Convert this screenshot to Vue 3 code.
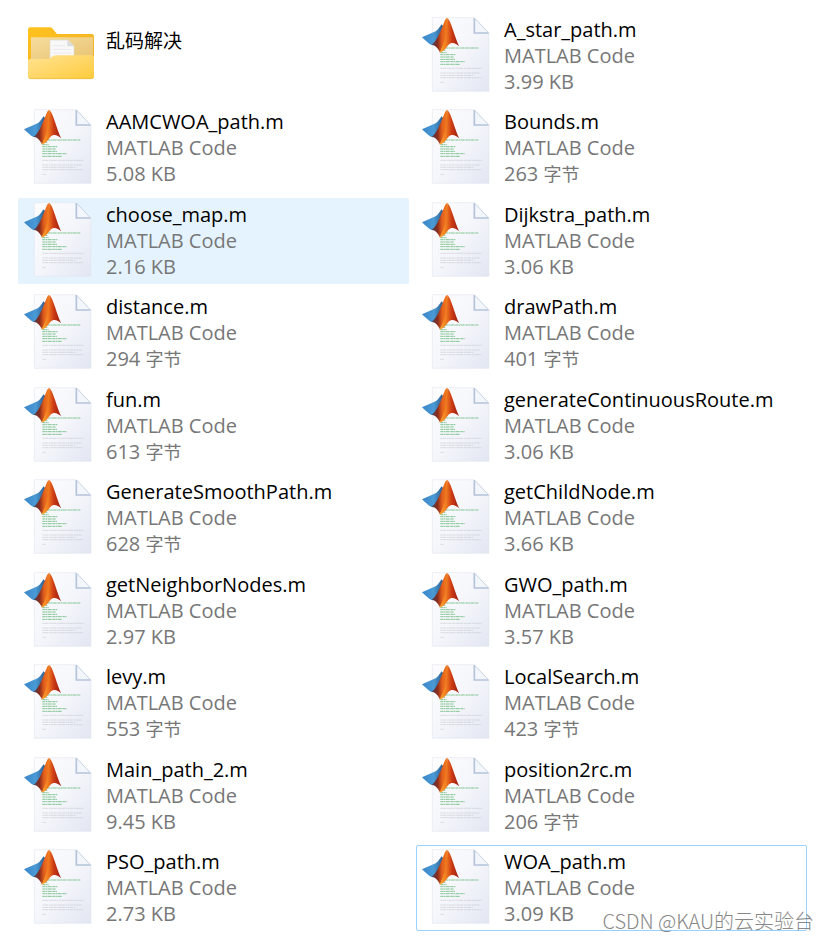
<script setup>
import { ref } from 'vue'

const files = [
  { name: '乱码解决', folder: true },
  { name: 'A_star_path.m', size: '3.99', unit: 'KB' },
  { name: 'AAMCWOA_path.m', size: '5.08', unit: 'KB' },
  { name: 'Bounds.m', size: '263', unit: '字节' },
  { name: 'choose_map.m', size: '2.16', unit: 'KB' },
  { name: 'Dijkstra_path.m', size: '3.06', unit: 'KB' },
  { name: 'distance.m', size: '294', unit: '字节' },
  { name: 'drawPath.m', size: '401', unit: '字节' },
  { name: 'fun.m', size: '613', unit: '字节' },
  { name: 'generateContinuousRoute.m', size: '3.06', unit: 'KB' },
  { name: 'GenerateSmoothPath.m', size: '628', unit: '字节' },
  { name: 'getChildNode.m', size: '3.66', unit: 'KB' },
  { name: 'getNeighborNodes.m', size: '2.97', unit: 'KB' },
  { name: 'GWO_path.m', size: '3.57', unit: 'KB' },
  { name: 'levy.m', size: '553', unit: '字节' },
  { name: 'LocalSearch.m', size: '423', unit: '字节' },
  { name: 'Main_path_2.m', size: '9.45', unit: 'KB' },
  { name: 'position2rc.m', size: '206', unit: '字节' },
  { name: 'PSO_path.m', size: '2.73', unit: 'KB' },
  { name: 'WOA_path.m', size: '3.09', unit: 'KB' },
]

const hovered = ref('choose_map.m')
const focused = ref('WOA_path.m')
</script>

<template>
  <main class="explorer">
    <!-- shared icon definitions -->
    <svg class="defs" aria-hidden="true">
      <defs>
        <linearGradient id="paper" x1="0" y1="0" x2="1" y2="1">
          <stop offset="0" stop-color="#fdfdfe" />
          <stop offset="0.5" stop-color="#f5f6fb" />
          <stop offset="1" stop-color="#e2e6f2" />
        </linearGradient>
        <linearGradient id="wing" x1="0" y1="0" x2="1" y2="0">
          <stop offset="0" stop-color="#3a86c8" />
          <stop offset="0.5" stop-color="#4a9ad6" />
          <stop offset="1" stop-color="#27507f" />
        </linearGradient>
        <linearGradient id="ridge" x1="0" y1="0" x2="1" y2="0">
          <stop offset="0" stop-color="#44405a" />
          <stop offset="0.35" stop-color="#8a2c1c" />
          <stop offset="0.6" stop-color="#e4601c" />
          <stop offset="1" stop-color="#f68a22" />
        </linearGradient>
        <linearGradient id="slope" x1="0" y1="0" x2="1" y2="0">
          <stop offset="0" stop-color="#fba82c" />
          <stop offset="0.35" stop-color="#f07a20" />
          <stop offset="0.62" stop-color="#cc3a14" />
          <stop offset="1" stop-color="#961c10" />
        </linearGradient>
        <linearGradient id="folder-back" x1="0" y1="0" x2="1" y2="1">
          <stop offset="0" stop-color="#ffc21c" />
          <stop offset="1" stop-color="#eeb02a" />
        </linearGradient>
        <linearGradient id="folder-panel" x1="0" y1="0" x2="1" y2="1">
          <stop offset="0" stop-color="#f6dc9c" />
          <stop offset="1" stop-color="#e8c474" />
        </linearGradient>
        <linearGradient id="folder-front" x1="0" y1="0" x2="1" y2="1">
          <stop offset="0" stop-color="#ffe392" />
          <stop offset="1" stop-color="#ffcb3d" />
        </linearGradient>
      </defs>
      <symbol id="matlab-file" viewBox="0 0 216 234">
        <path d="M37 2H163L207 49V223H37Z" fill="url(#paper)" stroke="#e4e7f0" stroke-width="2" />
        <path d="M164 4L205 48L164 46Z" fill="#f3f7fc" />
        <path d="M163 3V48H206" fill="none" stroke="#b4c3da" stroke-width="5" />
        <path d="M165 5L205 47" stroke="#cbd5e4" stroke-width="3" />
        <g fill="none" stroke="#82c592" stroke-width="3" stroke-dasharray="9 1 5 1 12 2">
          <path d="M76 93H176M61 100H76M61 107H80M61 113H107M61 120H102M61 127H105M61 134H134M61 142H120" />
        </g>
        <g fill="none" stroke="#c9cbd2" stroke-width="2" stroke-dasharray="7 1 10 2 4 1">
          <path d="M61 154H185M61 168H180M61 175H160M61 182H184M61 196H72" />
        </g>
        <path d="M6 61L40 46C50 44 57 33 65 22L76 36L54 76L34 84C24 80 16 69 6 61Z" fill="url(#wing)" />
        <path d="M34 84C48 76 57 54 69 25C73 14 77 3 82 3L88 50L60 106C54 95 46 82 34 84Z" fill="url(#ridge)" />
        <path d="M82 3C94 12 105 64 118 88C106 78 95 74 85 84C77 94 71 104 58 107C72 84 83 45 82 3Z" fill="url(#slope)" />
      </symbol>
      <symbol id="folder" viewBox="0 0 216 234">
        <path d="M18 48V38Q18 31 25 31H82Q88 31 92 35L105 51H209Q216 51 216 58V174Q216 180 210 180H25Q18 180 18 174Z" fill="url(#folder-back)" />
        <path d="M27 61H213V126H27Z" fill="url(#folder-panel)" />
        <path d="M84 69H138L156 87V130H84Z" fill="#f8f8f8" stroke="#ddd9ce" stroke-width="2" />
        <path d="M136 69V88H156Z" fill="#dcdcdc" />
        <path d="M92 86H130M92 97H147M92 108H147" stroke="#e9eaec" stroke-width="3" />
        <path d="M18 133Q18 126 25 126H75Q82 126 88 121L92 118Q96 115 103 115H209Q216 115 216 122V178Q216 186 208 186H26Q18 186 18 178Z" fill="url(#folder-front)" />
        <path d="M20 181Q22 185 28 185H207Q213 185 214 181" fill="none" stroke="#e5b73b" stroke-width="2" />
      </symbol>
    </svg>

    <ul class="tiles">
      <li
        v-for="file in files"
        :key="file.name"
        :class="['tile', { 'tile--hover': file.name === hovered, 'tile--focus': file.name === focused }]"
      >
        <svg class="tile__icon" aria-hidden="true">
          <use :href="file.folder ? '#folder' : '#matlab-file'" />
        </svg>
        <div class="tile__text">
          <span :class="['tile__name', { 'tile__name--folder': file.folder }]">{{ file.name }}</span>
          <template v-if="!file.folder">
            <span class="tile__meta">MATLAB Code</span>
            <span class="tile__meta">{{ file.size }} <span :class="{ tile__cjk: file.unit !== 'KB' }">{{ file.unit }}</span></span>
          </template>
        </div>
      </li>
    </ul>

    <span class="watermark">CSDN @KAU的云实验台</span>
  </main>
</template>

<style>
body {
  background: #fff;
}
</style>

<style scoped>
.explorer {
  position: relative;
  display: flex;
  min-height: 100vh;
  box-sizing: border-box;
  padding: 13px 21px 9px 18px;
  font-family: 'Open Sans', 'Noto Sans CJK SC', sans-serif;
  font-size: 20px;
  line-height: 26px;
}

.defs {
  position: absolute;
  width: 0;
  height: 0;
}

.tiles {
  flex: 1;
  display: grid;
  grid-template-columns: 1fr 1fr;
  align-content: space-between;
  column-gap: 7px;
  margin: 0;
  padding: 0;
  list-style: none;
}

.tile {
  display: flex;
  gap: 12px;
  box-sizing: border-box;
  min-width: 0;
  padding: 3px;
  border: 1px solid transparent;
  border-radius: 2px;
}

.tile--hover {
  background: #e5f3ff;
}

.tile--focus {
  border-color: #99d1ff;
}

.tile__icon {
  flex: none;
  width: 72px;
  height: 78px;
}

.tile__text {
  display: flex;
  flex-direction: column;
  min-width: 0;
  white-space: nowrap;
}

.tile__name {
  color: #000;
}

.tile__name--folder {
  padding-top: 11px;
  font-size: 19px;
}

.tile__meta {
  color: #777;
}

.tile__cjk {
  font-size: 18px;
  line-height: 1;
}

/* sits over the last tile's corner */
.watermark {
  position: absolute;
  right: 14px;
  bottom: 6px;
  color: #888;
  font-family: 'Noto Sans CJK SC', sans-serif;
  font-size: 20px;
  font-weight: 300;
}
</style>
